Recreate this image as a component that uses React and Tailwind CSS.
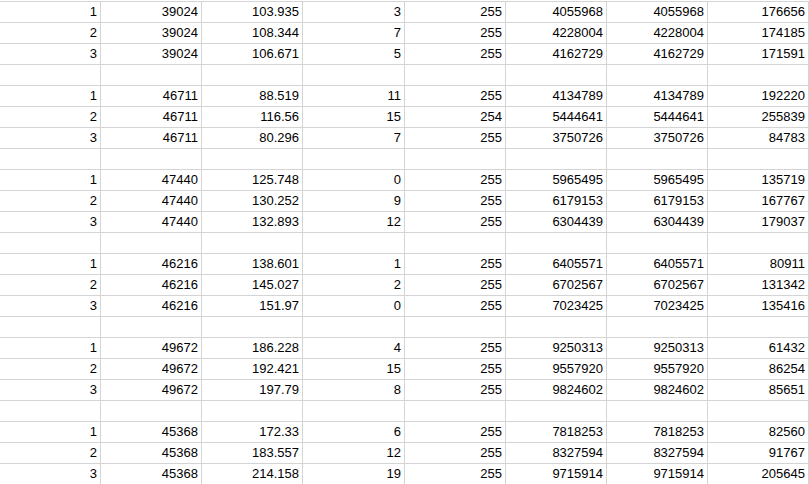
import React from 'react';

const groups = [
  [
    ['1', '39024', '103.935', '3', '255', '4055968', '4055968', '176656'],
    ['2', '39024', '108.344', '7', '255', '4228004', '4228004', '174185'],
    ['3', '39024', '106.671', '5', '255', '4162729', '4162729', '171591'],
  ],
  [
    ['1', '46711', '88.519', '11', '255', '4134789', '4134789', '192220'],
    ['2', '46711', '116.56', '15', '254', '5444641', '5444641', '255839'],
    ['3', '46711', '80.296', '7', '255', '3750726', '3750726', '84783'],
  ],
  [
    ['1', '47440', '125.748', '0', '255', '5965495', '5965495', '135719'],
    ['2', '47440', '130.252', '9', '255', '6179153', '6179153', '167767'],
    ['3', '47440', '132.893', '12', '255', '6304439', '6304439', '179037'],
  ],
  [
    ['1', '46216', '138.601', '1', '255', '6405571', '6405571', '80911'],
    ['2', '46216', '145.027', '2', '255', '6702567', '6702567', '131342'],
    ['3', '46216', '151.97', '0', '255', '7023425', '7023425', '135416'],
  ],
  [
    ['1', '49672', '186.228', '4', '255', '9250313', '9250313', '61432'],
    ['2', '49672', '192.421', '15', '255', '9557920', '9557920', '86254'],
    ['3', '49672', '197.79', '8', '255', '9824602', '9824602', '85651'],
  ],
  [
    ['1', '45368', '172.33', '6', '255', '7818253', '7818253', '82560'],
    ['2', '45368', '183.557', '12', '255', '8327594', '8327594', '91767'],
    ['3', '45368', '214.158', '19', '255', '9715914', '9715914', '205645'],
  ],
];

const colWidths = ['w-[101px]', 'w-[101px]', 'w-[101px]', 'w-[102px]', 'w-[101px]', 'w-[101px]', 'w-[101px]', 'w-[101px]'];

const empty = ['', '', '', '', '', '', '', ''];

const rows = groups.flatMap((g, i) => (i < groups.length - 1 ? [...g, empty] : g));

const Row = ({ cells }) => (
  <div className="flex h-[21px] border-t border-[#d4d4d4]">
    {cells.map((c, i) => (
      <div
        key={i}
        className={`${colWidths[i]} shrink-0 h-full border-r border-[#d4d4d4] flex items-center justify-end pr-[3px]`}
      >
        {c}
      </div>
    ))}
  </div>
);

export default function App() {
  return (
    <div
      className="w-[809px] h-[484px] overflow-hidden bg-white pt-[1px] text-[13px] text-black"
      style={{ fontFamily: '"Liberation Sans", Arial, sans-serif' }}
    >
      {rows.map((r, i) => (
        <Row key={i} cells={r} />
      ))}
    </div>
  );
}
